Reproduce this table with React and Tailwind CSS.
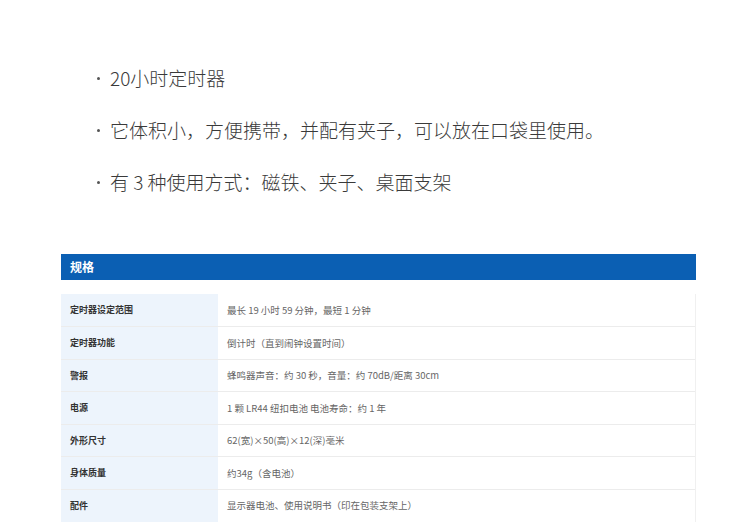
const font = { fontFamily: '"Noto Sans CJK SC", "Noto Sans", sans-serif' };

const bullets = [
  '20小时定时器',
  '它体积小，方便携带，并配有夹子，可以放在口袋里使用。',
  '有 3 种使用方式：磁铁、夹子、桌面支架',
];

const specs = [
  ['定时器设定范围', '最长 19 小时 59 分钟，最短 1 分钟'],
  ['定时器功能', '倒计时（直到闹钟设置时间）'],
  ['警报', '蜂鸣器声音：约 30 秒，音量：约 70dB/距离 30cm'],
  ['电源', '1 颗 LR44 纽扣电池 电池寿命：约 1 年'],
  ['外形尺寸', '62(宽)×50(高)×12(深)毫米'],
  ['身体质量', '约34g（含电池）'],
  ['配件', '显示器电池、使用说明书（印在包装支架上）'],
];

export default function App() {
  return (
    <div className="w-[749px] h-[532px] bg-white overflow-hidden" style={font}>
      <ul className="pt-[64px] pl-[97px] flex flex-col gap-[24px] text-[19px] leading-[28px] text-[#3a3a3a] font-light">
        {bullets.map((b) => (
          <li key={b} className="flex items-center">
            <span className="w-[3px] h-[3px] rounded-full bg-[#555] mr-[10px] shrink-0" />
            <span>{b}</span>
          </li>
        ))}
      </ul>

      <section className="mt-[58px] mx-[61px] w-[635px]">
        <div className="h-[26px] bg-[#0b5fb3] flex items-center px-[9px]">
          <h2 className="text-[12px] font-bold text-white">规格</h2>
        </div>
        <table className="mt-[14px] w-full border-collapse">
          <tbody>
            {specs.map(([k, v], i) => (
              <tr
                key={k}
                className={`h-[32.5px] ${i < specs.length - 1 ? 'border-b border-[#ececec]' : ''}`}
              >
                <th className="w-[157px] bg-[#edf4fc] text-left pl-[9px] text-[9px] font-bold text-[#333]">
                  {k}
                </th>
                <td className="pl-[9px] text-[9.5px] text-[#666] border-r border-[#f0f0f0]">{v}</td>
              </tr>
            ))}
          </tbody>
        </table>
      </section>
    </div>
  );
}
